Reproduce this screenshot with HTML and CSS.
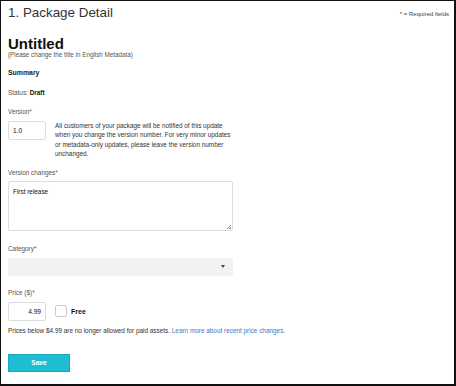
FILE: index.html
```html
<!DOCTYPE html>
<html>
<head>
<meta charset="utf-8">
<link rel="stylesheet" href="styles.css">
</head>
<body>
<div class="frame">
  <div class="header">
    <h1 class="title">1. Package Detail</h1>
    <span class="req">* = Required fields</span>
  </div>
  <h2 class="name">Untitled</h2>
  <p class="hint">(Please change the title in English Metadata)</p>
  <h3 class="summary">Summary</h3>
  <p class="status">Status: <b>Draft</b></p>

  <label class="label l-version">Version*</label>
  <div class="version-row">
    <div class="input small">1.0</div>
    <p class="note">All customers of your package will be notified of this update when you change the version number. For very minor updates or metadata-only updates, please leave the version number unchanged.</p>
  </div>

  <label class="label l-changes">Version changes*</label>
  <div class="textarea">First release<span class="grip"></span></div>

  <label class="label l-category">Category*</label>
  <div class="select"><span class="caret"></span></div>

  <label class="label l-price">Price ($)*</label>
  <div class="price-row">
    <div class="input small right">4.99</div>
    <span class="checkbox"></span>
    <span class="free">Free</span>
  </div>
  <p class="price-note">Prices below $4.99 are no longer allowed for paid assets. <a href="#" class="link">Learn more about recent price changes.</a></p>

  <button class="save">Save</button>
</div>
</body>
</html>
```

FILE: styles.css
```css
html, body {
  margin: 0;
  padding: 0;
  background: #fff;
}
.frame {
  width: 456px;
  height: 386px;
  box-sizing: border-box;
  border: 1px solid #111;
  border-right-width: 2px;
  border-bottom-width: 2px;
  padding: 0 7px;
  font-family: "Liberation Sans", Arial, sans-serif;
  color: #333;
  font-size: 6.4px;
}
.header {
  display: flex;
  justify-content: space-between;
  align-items: flex-start;
  padding-top: 4px;
}
.title {
  margin: 0;
  font-size: 13.4px;
  font-weight: normal;
  line-height: 16px;
  color: #333;
}
.req {
  margin-top: 5px;
  margin-right: -2px;
  font-size: 6px;
  line-height: 8px;
  color: #444;
}
.name {
  margin: 16px 0 0;
  font-size: 15px;
  line-height: 14px;
  font-weight: bold;
  color: #111;
}
.hint {
  margin: 0;
  font-size: 6.3px;
  line-height: 7px;
  color: #555;
}
.summary {
  margin: 9.5px 0 0;
  font-size: 6.9px;
  line-height: 10px;
  font-weight: bold;
  color: #222;
}
.status {
  margin: 10px 0 0;
  font-size: 6.4px;
  line-height: 10px;
  color: #555;
}
.status b {
  color: #111;
}
.label {
  display: block;
  font-size: 6.4px;
  line-height: 10px;
  color: #555;
}
.l-version { margin-top: 9px; }
.l-changes { margin-top: 9px; }
.l-category { margin-top: 12.7px; }
.l-price { margin-top: 11.7px; }
.version-row {
  display: flex;
  gap: 9px;
  margin-top: 4px;
}
.input {
  box-sizing: border-box;
  border: 1px solid #ddd;
  border-radius: 2px;
  height: 19px;
  font-size: 6.6px;
  color: #111;
  padding: 0 4px;
  display: flex;
  align-items: center;
}
.small {
  width: 38px;
  flex: none;
}
.right {
  justify-content: flex-end;
}
.note {
  margin: 0;
  width: 177px;
  font-size: 6.4px;
  line-height: 9.6px;
  color: #333;
}
.textarea {
  position: relative;
  box-sizing: border-box;
  margin-top: 3px;
  width: 225px;
  height: 50px;
  border: 1px solid #ddd;
  border-radius: 2px;
  padding: 6px 4px;
  font-size: 6.4px;
  line-height: 8px;
  color: #111;
}
.grip {
  position: absolute;
  right: 1px;
  bottom: 1px;
  width: 4px;
  height: 4px;
  background: linear-gradient(135deg, transparent 45%, #999 45%, #999 55%, transparent 55%, transparent 75%, #999 75%);
}
.select {
  margin-top: 4px;
  width: 225px;
  height: 18.3px;
  background: #f2f2f2;
  border-radius: 1px;
  display: flex;
  align-items: center;
  justify-content: flex-end;
  padding-right: 8px;
  box-sizing: border-box;
}
.caret {
  width: 0;
  height: 0;
  border-left: 2.5px solid transparent;
  border-right: 2.5px solid transparent;
  border-top: 3px solid #444;
}
.price-row {
  display: flex;
  align-items: center;
  margin-top: 4px;
}
.checkbox {
  box-sizing: border-box;
  margin-left: 9px;
  width: 12px;
  height: 12px;
  border: 1px solid #ccc;
  border-radius: 2px;
}
.free {
  margin-left: 4px;
  font-size: 7px;
  font-weight: bold;
  color: #111;
}
.price-note {
  margin: 5px 0 0;
  font-size: 6.4px;
  line-height: 10px;
  color: #333;
}
.link {
  color: #3a7bbf;
  text-decoration: none;
}
.save {
  display: block;
  margin-top: 18px;
  width: 62px;
  height: 18.5px;
  border: 1px solid #15a9bd;
  background: #1fbdd4;
  color: #fff;
  font-family: "Liberation Sans", Arial, sans-serif;
  font-weight: bold;
  font-size: 6.6px;
  padding: 0;
  border-radius: 0;
}
```
